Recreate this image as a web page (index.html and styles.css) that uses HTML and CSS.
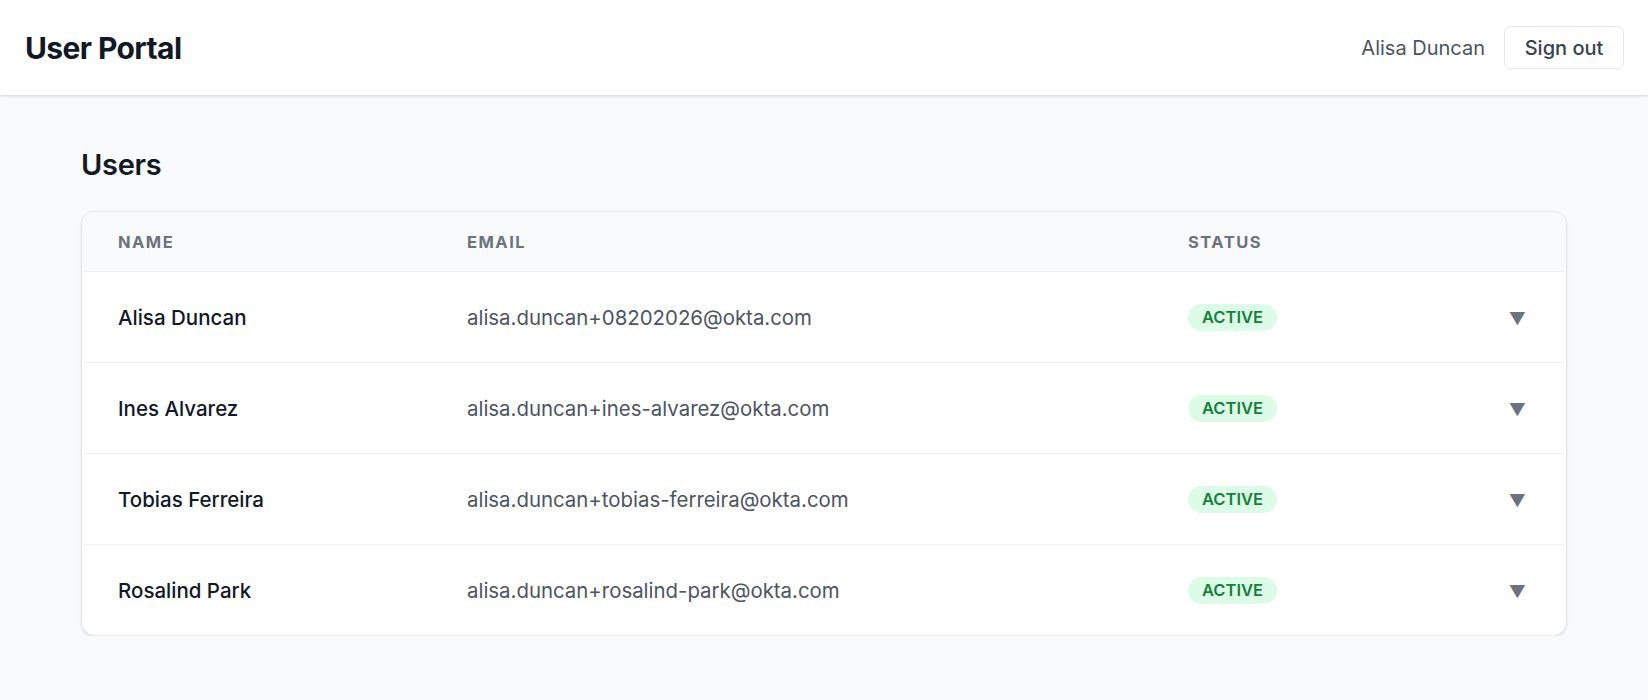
FILE: index.html
```html
<!DOCTYPE html>
<html lang="en">
<head>
<meta charset="utf-8">
<title>User Portal</title>
<link rel="stylesheet" href="styles.css">
</head>
<body>
<header class="topbar">
  <div class="brand">User Portal</div>
  <div class="account">
    <span class="account-name">Alisa Duncan</span>
    <button class="btn-signout" type="button">Sign out</button>
  </div>
</header>
<main class="content">
  <h1 class="page-title">Users</h1>
  <section class="card">
    <div class="row head">
      <div class="th">Name</div>
      <div class="th">Email</div>
      <div class="th">Status</div>
      <div class="th"></div>
    </div>
    <div class="row">
      <div class="cell name">Alisa Duncan</div>
      <div class="cell email">alisa.duncan+08202026@okta.com</div>
      <div class="cell"><span class="badge">Active</span></div>
      <div class="cell action"><span class="caret">▼</span></div>
    </div>
    <div class="row">
      <div class="cell name">Ines Alvarez</div>
      <div class="cell email">alisa.duncan+ines-alvarez@okta.com</div>
      <div class="cell"><span class="badge">Active</span></div>
      <div class="cell action"><span class="caret">▼</span></div>
    </div>
    <div class="row">
      <div class="cell name">Tobias Ferreira</div>
      <div class="cell email">alisa.duncan+tobias-ferreira@okta.com</div>
      <div class="cell"><span class="badge">Active</span></div>
      <div class="cell action"><span class="caret">▼</span></div>
    </div>
    <div class="row">
      <div class="cell name">Rosalind Park</div>
      <div class="cell email">alisa.duncan+rosalind-park@okta.com</div>
      <div class="cell"><span class="badge">Active</span></div>
      <div class="cell action"><span class="caret">▼</span></div>
    </div>
  </section>
</main>
</body>
</html>
```
FILE: styles.css
```css
* { box-sizing: border-box; }
html, body { margin: 0; padding: 0; }
body {
  background: #f9fafb;
  font-family: Inter, "Noto Sans", "Liberation Sans", sans-serif;
  color: #111827;
  -webkit-font-smoothing: antialiased;
}
.topbar {
  height: 95px;
  background: #ffffff;
  display: flex;
  align-items: center;
  justify-content: space-between;
  padding: 0 24px 0 25px;
  box-shadow: 0 1px 3px rgba(0,0,0,0.12), 0 1px 2px rgba(0,0,0,0.06);
  position: relative;
}
.brand {
  font-size: 30px;
  font-weight: 700;
  letter-spacing: -0.02em;
  color: #111827;
}
.account {
  display: flex;
  align-items: center;
  gap: 19px;
}
.account-name {
  font-size: 20px;
  color: #4b5563;
}
.btn-signout {
  font-family: inherit;
  font-size: 20px;
  font-weight: 500;
  color: #374151;
  background: #ffffff;
  border: 1px solid #e5e7eb;
  border-radius: 7px;
  height: 43px;
  width: 120px;
  padding: 0;
}
.content {
  padding: 0 81px;
}
.page-title {
  margin: 0;
  padding-top: 52px;
  height: 116px;
  font-size: 29px;
  font-weight: 600;
  letter-spacing: -0.01em;
  color: #111827;
  line-height: 36px;
}
.card {
  background: #ffffff;
  border: 1px solid #e5e7eb;
  border-radius: 14px;
  box-shadow: 0 1px 3px rgba(0,0,0,0.08), 0 1px 2px rgba(0,0,0,0.04);
  overflow: hidden;
}
.row {
  display: grid;
  grid-template-columns: 349px 721px 1fr 40px;
  align-items: center;
  padding: 0 40px 0 36px;
  height: 91px;
  border-top: 1px solid #f0f1f3;
}
.row.head {
  height: 59px;
  background: #f9fafb;
  border-top: none;
}
.th {
  font-size: 16.5px;
  font-weight: 700;
  text-transform: uppercase;
  letter-spacing: 0.09em;
  color: #6b7280;
}
.cell {
  font-size: 20.4px;
}
.name {
  color: #111827;
  font-weight: 500;
  font-size: 20.5px;
}
.email {
  color: #4b5563;
}
.badge {
  display: inline-block;
  background: #dcfce7;
  color: #15803d;
  font-size: 16.5px;
  font-weight: 600;
  text-transform: uppercase;
  border-radius: 999px;
  padding: 3px 14px;
  line-height: 21px;
}
.action {
  text-align: right;
}
.caret {
  color: #6b7280;
  font-size: 17px;
}
```
